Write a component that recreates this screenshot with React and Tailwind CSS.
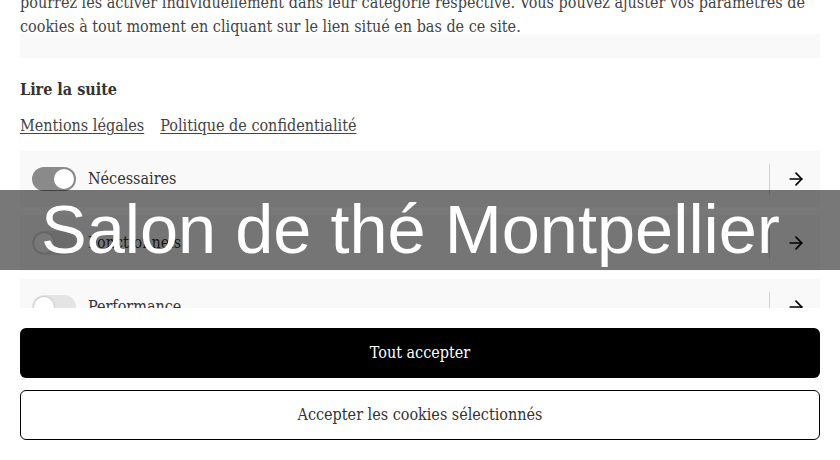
import React from 'react';
import { ArrowRight } from 'lucide-react';

const categories = [
  { label: 'Nécessaires', on: true },
  { label: 'Fonctionnels', on: false },
  { label: 'Performance', on: false },
];

const Toggle = ({ on }) => (
  <div className={`w-11 h-6 rounded-full flex items-center px-[2px] shrink-0 ${on ? 'bg-[#8a8a8a] justify-end' : 'bg-[#e4e4e4] justify-start'}`}>
    <div className={`w-5 h-5 rounded-full bg-white ${on ? '' : 'shadow-[0_0_0_1px_#d0d0d0]'}`} />
  </div>
);

const App = () => {
  return (
    <div className="relative w-[840px] h-[460px] overflow-hidden bg-white text-[#444] font-['DejaVu_Serif_Condensed','DejaVu_Serif',serif] text-base">
      <div className="h-[308px] overflow-hidden px-5">
        <div className="-mt-[9px] leading-6 whitespace-nowrap">
          <p>pourrez les activer individuellement dans leur catégorie respective. Vous pouvez ajuster vos paramètres de</p>
          <p>cookies à tout moment en cliquant sur le lien situé en bas de ce site.</p>
        </div>
        <div className="h-6 -mt-[5px] bg-[#f9f9f9]" />

        <p className="mt-5 leading-6 font-bold text-[#333]">Lire la suite</p>

        <div className="mt-3 flex gap-4 leading-6">
          <a className="underline underline-offset-2 decoration-1">Mentions légales</a>
          <a className="underline underline-offset-2 decoration-1">Politique de confidentialité</a>
        </div>

        <div className="mt-[13px] flex flex-col gap-2">
          {categories.map((c) => (
            <div key={c.label} className="h-14 shrink-0 bg-[#f9f9fa] flex items-center pl-3 pr-3.5">
              <Toggle on={c.on} />
              <span className="ml-3 flex-1 text-[#333]">{c.label}</span>
              <div className="w-px h-[30px] bg-[#cfcfd6]" />
              <ArrowRight className="ml-4 w-5 h-5 text-black" strokeWidth={2} />
            </div>
          ))}
        </div>
      </div>

      <div className="px-5 pt-5 flex flex-col gap-3">
        <button className="h-[50px] rounded-md bg-black text-white">Tout accepter</button>
        <button className="h-[50px] rounded-md border border-black bg-white text-[#333]">Accepter les cookies sélectionnés</button>
      </div>

      <div className="absolute left-0 right-0 top-[190px] h-20 bg-black/[0.53] flex items-center pl-[41px]">
        <h1 className="text-white font-['Liberation_Sans',Arial,sans-serif] text-[68.5px] leading-none whitespace-nowrap">Salon de thé Montpellier</h1>
      </div>
    </div>
  );
};

export default App;
